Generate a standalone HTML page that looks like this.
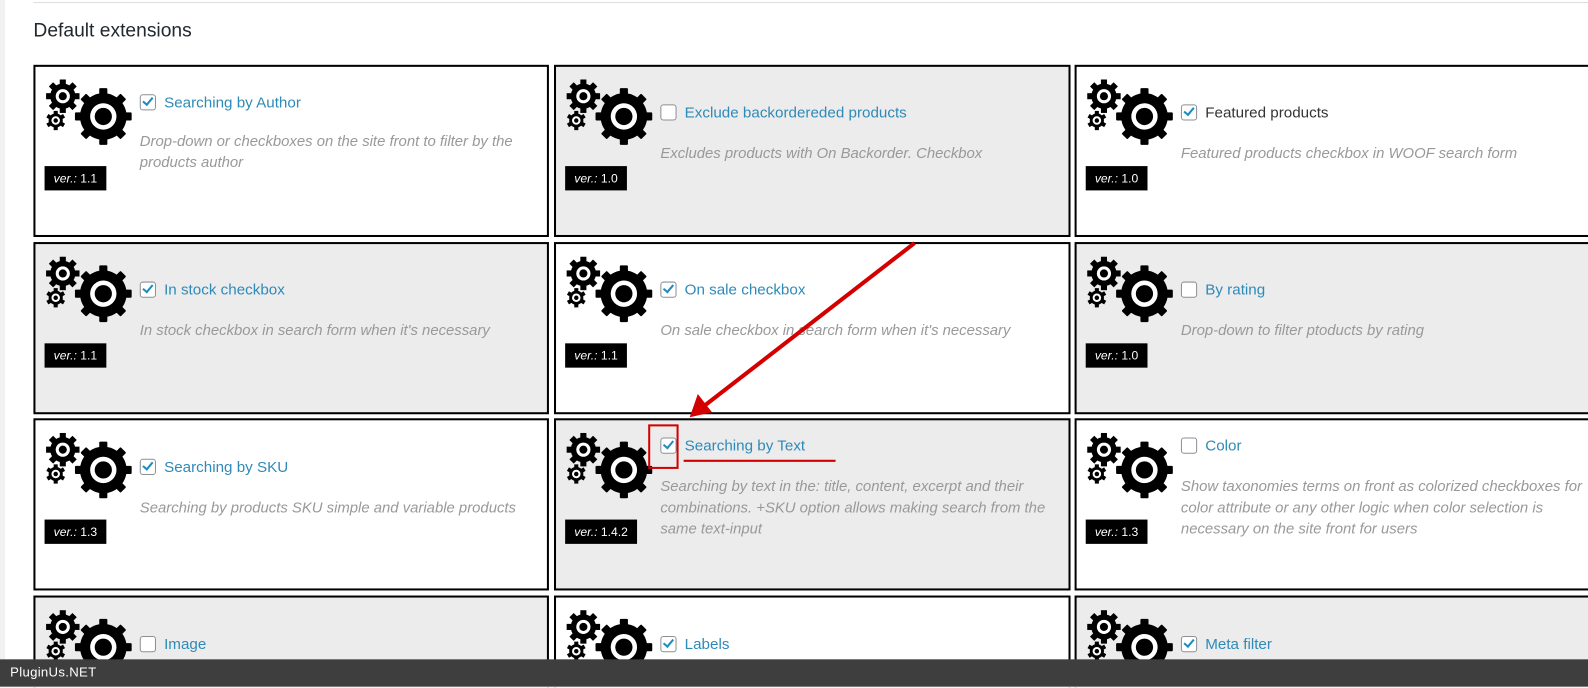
<!DOCTYPE html>
<html><head><meta charset="utf-8"><style>
html,body{margin:0;width:1588px;height:688px;overflow:hidden}
body{background:#fff;font-family:"Liberation Sans",sans-serif;position:relative}
#w{position:absolute;left:0;top:0;width:1568px;height:679px;overflow:hidden;transform:scale(1.0128);transform-origin:0 0}
.strip{position:absolute;left:0;top:0;width:5px;height:660px;background:#f1f1f1}
.topline{position:absolute;left:33px;top:2px;width:1555px;height:1px;background:#ddd}
h2{position:absolute;left:33px;top:20px;margin:0;font-size:19px;font-weight:normal;color:#23282d}
.card{position:absolute;box-sizing:border-box;border:2px solid #000;height:170px;background:#fff;overflow:hidden}
.g{background:#ececec}
.gear{position:absolute;left:5px;top:4px}
.ver{position:absolute;left:9px;top:98px;height:24px;background:#000;color:#fff;font-size:12px;line-height:24px;padding:0 9px}
.t{position:absolute;left:103px;font-size:15px;color:#2e8ab8;white-space:nowrap;line-height:18px}
.cb{display:inline-block;width:14px;height:14px;border:1px solid #8c8f94;border-radius:3px;background:#fff;vertical-align:-3px;margin-right:8px;position:relative}
.cb.on::after{content:"";position:absolute;left:4px;top:0px;width:4px;height:8px;border:solid #1e8cbe;border-width:0 2.5px 2.5px 0;transform:rotate(40deg)}
.d{position:absolute;left:103px;right:10px;font-size:14.7px;font-style:italic;color:#999;line-height:21px}
.bar{position:absolute;left:0;top:651px;width:1588px;height:28px;background:#3e3e3e;color:#fff;font-size:13px;line-height:26px;padding-left:10px;box-sizing:border-box;letter-spacing:.3px}
.cover{position:absolute;left:0;top:678px;width:1600px;height:20px;background:#fff;z-index:5}
</style></head><body>
<svg width="0" height="0" style="position:absolute"><defs>
<g id="gr">
<g transform="translate(62,45)"><circle r="23"/><rect x="-4" y="-28" width="8" height="56" rx="1"/><rect x="-4" y="-28" width="8" height="56" rx="1" transform="rotate(45)"/><rect x="-4" y="-28" width="8" height="56" rx="1" transform="rotate(90)"/><rect x="-4" y="-28" width="8" height="56" rx="1" transform="rotate(135)"/><circle r="13" fill="#fff"/><circle r="8.5"/></g>
<g transform="translate(22,25)"><circle r="12.5"/><rect x="-3" y="-16.5" width="6" height="33"/><rect x="-3" y="-16.5" width="6" height="33" transform="rotate(45)"/><rect x="-3" y="-16.5" width="6" height="33" transform="rotate(90)"/><rect x="-3" y="-16.5" width="6" height="33" transform="rotate(135)"/><circle r="7" fill="#fff"/><circle r="4"/></g>
<g transform="translate(15,49)"><circle r="7"/><rect x="-2" y="-9.5" width="4" height="19"/><rect x="-2" y="-9.5" width="4" height="19" transform="rotate(60)"/><rect x="-2" y="-9.5" width="4" height="19" transform="rotate(120)"/><circle r="4.2" fill="#fff"/><circle r="2.2"/></g>
</g></defs></svg>
<div class="strip"></div>
<div id="w">
<div class="topline"></div>
<h2>Default extensions</h2>

<div class="card" style="left:33px;top:64px;width:509px"><svg class="gear" width="95" height="80"><use href="#gr"/></svg><div class="t" style="top:27px"><span class="cb on"></span>Searching by Author</div><div class="d" style="top:64px">Drop-down or checkboxes on the site front to filter by the products author</div><div class="ver"><i>ver.:</i> 1.1</div></div>
<div class="card g" style="left:547px;top:64px;width:510px"><svg class="gear" width="95" height="80"><use href="#gr"/></svg><div class="t" style="top:37px"><span class="cb"></span>Exclude backordereded products</div><div class="d" style="top:76px">Excludes products with On Backorder. Checkbox</div><div class="ver"><i>ver.:</i> 1.0</div></div>
<div class="card" style="left:1061px;top:64px;width:540px"><svg class="gear" width="95" height="80"><use href="#gr"/></svg><div class="t" style="top:37px;color:#333"><span class="cb on"></span>Featured products</div><div class="d" style="top:76px">Featured products checkbox in WOOF search form</div><div class="ver"><i>ver.:</i> 1.0</div></div>

<div class="card g" style="left:33px;top:239px;width:509px"><svg class="gear" width="95" height="80"><use href="#gr"/></svg><div class="t" style="top:37px"><span class="cb on"></span>In stock checkbox</div><div class="d" style="top:76px">In stock checkbox in search form when it's necessary</div><div class="ver"><i>ver.:</i> 1.1</div></div>
<div class="card" style="left:547px;top:239px;width:510px"><svg class="gear" width="95" height="80"><use href="#gr"/></svg><div class="t" style="top:37px"><span class="cb on"></span>On sale checkbox</div><div class="d" style="top:76px">On sale checkbox in search form when it's necessary</div><div class="ver"><i>ver.:</i> 1.1</div></div>
<div class="card g" style="left:1061px;top:239px;width:540px"><svg class="gear" width="95" height="80"><use href="#gr"/></svg><div class="t" style="top:37px"><span class="cb"></span>By rating</div><div class="d" style="top:76px">Drop-down to filter ptoducts by rating</div><div class="ver"><i>ver.:</i> 1.0</div></div>

<div class="card" style="left:33px;top:413px;width:509px"><svg class="gear" width="95" height="80"><use href="#gr"/></svg><div class="t" style="top:38px"><span class="cb on"></span>Searching by SKU</div><div class="d" style="top:77px">Searching by products SKU simple and variable products</div><div class="ver"><i>ver.:</i> 1.3</div></div>
<div class="card g" style="left:547px;top:413px;width:510px"><svg class="gear" width="95" height="80"><use href="#gr"/></svg><div class="t" style="top:17px"><span class="cb on"></span>Searching by Text</div><div class="d" style="top:56px">Searching by text in the: title, content, excerpt and their combinations. +SKU option allows making search from the same text-input</div><div class="ver"><i>ver.:</i> 1.4.2</div></div>
<div class="card" style="left:1061px;top:413px;width:540px"><svg class="gear" width="95" height="80"><use href="#gr"/></svg><div class="t" style="top:17px"><span class="cb"></span>Color</div><div class="d" style="top:56px;right:30px">Show taxonomies terms on front as colorized checkboxes for color attribute or any other logic when color selection is necessary on the site front for users</div><div class="ver"><i>ver.:</i> 1.3</div></div>

<div class="card g" style="left:33px;top:588px;width:509px"><svg class="gear" width="95" height="80"><use href="#gr"/></svg><div class="t" style="top:38px"><span class="cb"></span>Image</div></div>
<div class="card" style="left:547px;top:588px;width:510px"><svg class="gear" width="95" height="80"><use href="#gr"/></svg><div class="t" style="top:38px"><span class="cb on"></span>Labels</div></div>
<div class="card g" style="left:1061px;top:588px;width:540px"><svg class="gear" width="95" height="80"><use href="#gr"/></svg><div class="t" style="top:38px"><span class="cb on"></span>Meta filter</div></div>

<svg style="position:absolute;left:0;top:0" width="1588" height="688">
<line x1="903" y1="240" x2="695" y2="401" stroke="#d40000" stroke-width="4"/>
<polygon points="681,412 689,389 703,407" fill="#d40000"/>
<rect x="641" y="420" width="28" height="42" fill="none" stroke="#d40000" stroke-width="2"/>
<line x1="675" y1="455" x2="825" y2="455" stroke="#d40000" stroke-width="2"/>
</svg>
<div class="bar">PluginUs.NET</div>
<div class="cover"></div>
</div>
</body></html>
